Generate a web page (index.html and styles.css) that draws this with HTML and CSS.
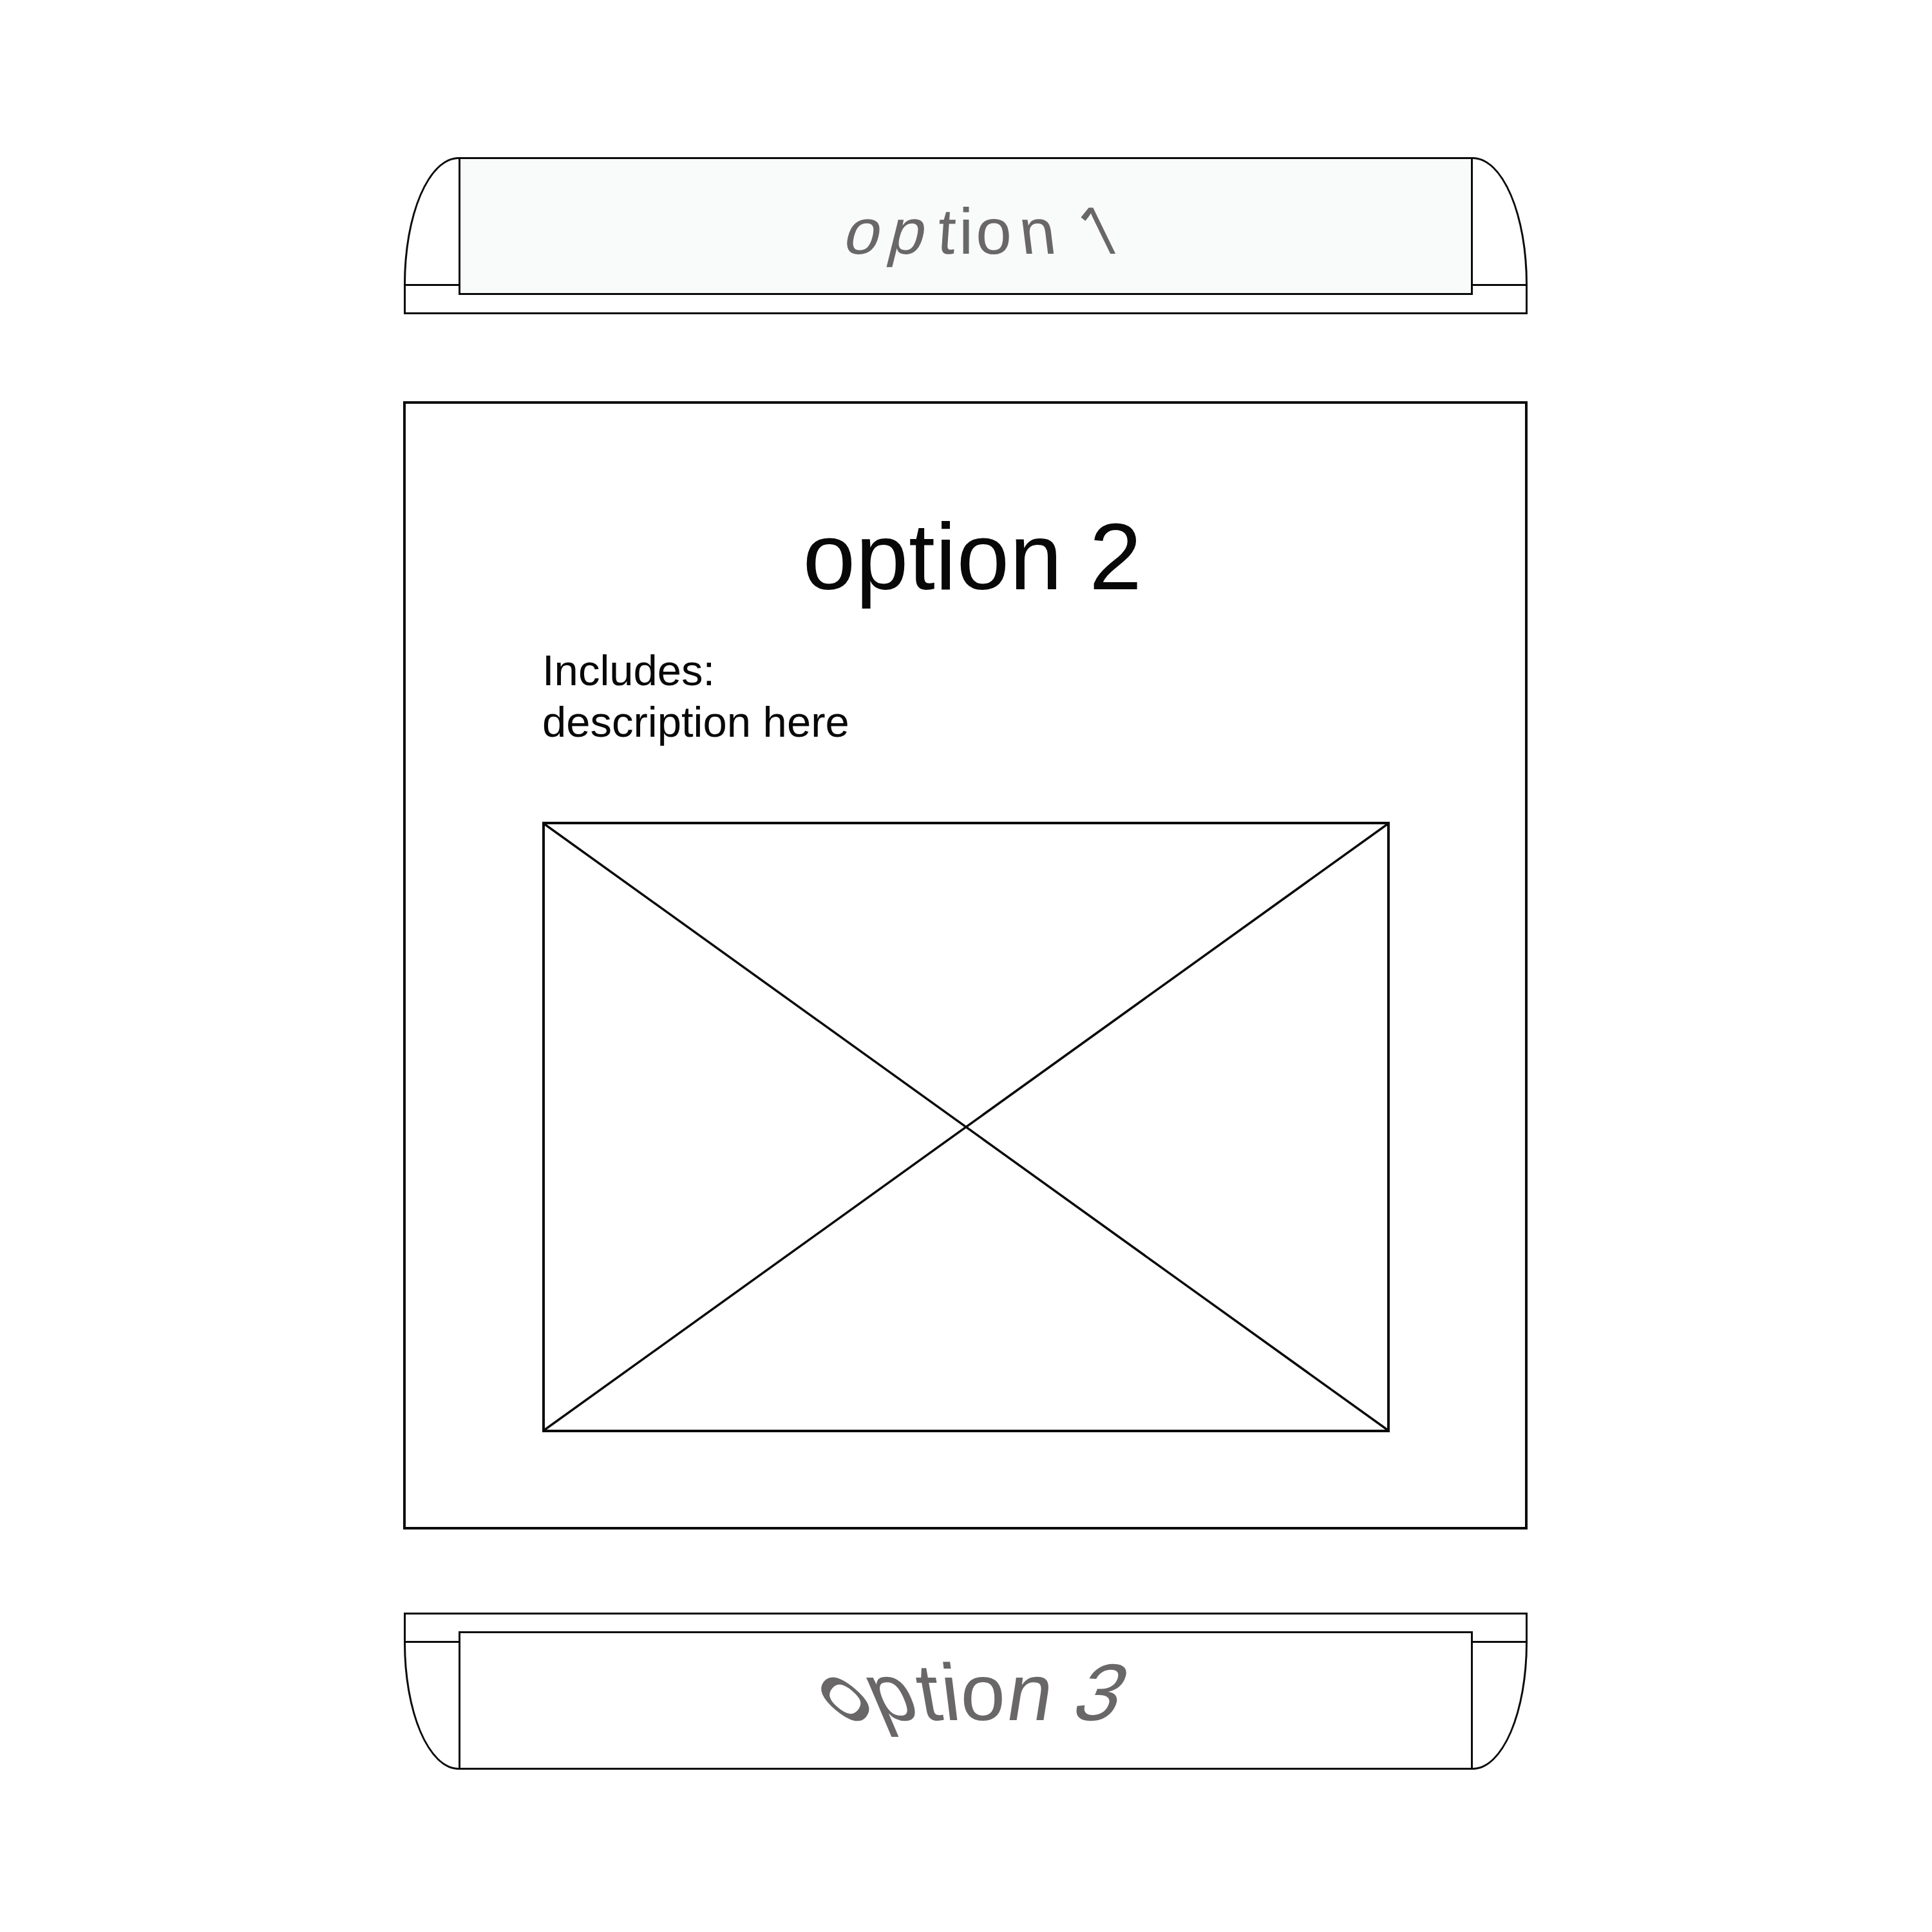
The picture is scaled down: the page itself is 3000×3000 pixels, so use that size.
FILE: index.html
```html
<!DOCTYPE html>
<html lang="en">
<head>
    <meta charset="UTF-8">
    <meta name="viewport" content="width=device-width, initial-scale=1.0">
    <title>Options Wireframe</title>
    <link rel="stylesheet" href="styles.css">
</head>
<body>
    <div class="options">
        <!-- Option 1 (collapsed, top) -->
        <div class="bar bar-top">
            <div class="cap cap-left">
                <div class="cap-curve"></div>
                <div class="cap-foot"></div>
            </div>
            <div class="bar-label label-one">
                <span class="g g-lean o1-o">o</span><span class="g g-lean o1-p">p</span><span class="g g-tilt o1-t">t</span><span class="g o1-i">i</span><span class="g o1-o2">o</span><span class="g g-back o1-n">n</span> <span class="g g-back-strong o1-one">1</span>
            </div>
            <div class="cap cap-right">
                <div class="cap-curve"></div>
                <div class="cap-foot"></div>
            </div>
        </div>

        <!-- Option 2 (expanded) -->
        <div class="option-card">
            <h2 class="option-title">option 2</h2>
            <p class="option-desc">Includes:<br>description here</p>
            <div class="image-placeholder">
                <svg viewBox="0 0 100 100" preserveAspectRatio="none">
                    <line x1="0" y1="0" x2="100" y2="100" vector-effect="non-scaling-stroke"/>
                    <line x1="100" y1="0" x2="0" y2="100" vector-effect="non-scaling-stroke"/>
                </svg>
            </div>
        </div>

        <!-- Option 3 (collapsed, bottom) -->
        <div class="bar bar-bottom">
            <div class="cap cap-left">
                <div class="cap-foot"></div>
                <div class="cap-curve"></div>
            </div>
            <div class="bar-label label-three">
                <span class="g g-flat o3-o">o</span><span class="g g-p3 o3-p">p</span><span class="g g-t3">t</span><span class="g g-i3 o3-i">i</span><span class="g o3-o2">o</span><span class="g g-n3 o3-n">n</span> <span class="g g-33">3</span>
            </div>
            <div class="cap cap-right">
                <div class="cap-foot"></div>
                <div class="cap-curve"></div>
            </div>
        </div>
    </div>
</body>
</html>
```

FILE: styles.css
```css
:root {
    --line: #0a0a0a;
    --muted-text: #696767;
    --label-bg: #f9fbfa;
}

* {
    margin: 0;
    padding: 0;
    box-sizing: border-box;
}

body {
    background: #fff;
    font-family: 'Liberation Sans', Arial, sans-serif;
    color: #080808;
}

.options {
    width: 1746px;
    margin-left: 626px;
    padding-top: 244px;
    display: flex;
    flex-direction: column;
}

/* collapsed option bars */
.bar {
    display: flex;
    width: 1745px;
    margin-left: 1px;
}

.bar-top {
    align-items: flex-start;
    border-bottom: 3px solid var(--line);
}

.bar-bottom {
    align-items: flex-end;
    border-top: 3px solid var(--line);
    margin-top: 129px;
}

.cap {
    width: 85px;
    height: 241px;
    display: flex;
    flex-direction: column;
}

.cap-curve {
    height: 200px;
    border-top: 3px solid var(--line);
    border-bottom: 3px solid var(--line);
}

.cap-foot {
    flex: 1;
}

.cap-left .cap-curve,
.cap-left .cap-foot {
    border-left: 3px solid var(--line);
}

.cap-right .cap-curve,
.cap-right .cap-foot {
    border-right: 3px solid var(--line);
}

.bar-top .cap-left .cap-curve { border-top-left-radius: 85px 197px; }
.bar-top .cap-right .cap-curve { border-top-right-radius: 85px 197px; }
.bar-bottom .cap-left .cap-curve { border-bottom-left-radius: 85px 197px; }
.bar-bottom .cap-right .cap-curve { border-bottom-right-radius: 85px 197px; }

.bar-label {
    flex: 1;
    height: 214px;
    border: 3px solid var(--line);
    color: var(--muted-text);
    font-family: 'Liberation Sans', Arial, sans-serif;
    white-space: nowrap;
}

.label-one {
    background: var(--label-bg);
    font-size: 100px;
    line-height: 100px;
    padding-top: 58px;
    padding-left: 591px;
}

.label-three {
    height: 215px;
    font-size: 125px;
    line-height: 125px;
    padding-top: 29px;
    padding-left: 562px;
}

/* hand-warped lettering */
.g {
    display: inline-block;
    transform-origin: 50% 85%;
}

.g-lean { transform: skewX(-14deg); }
.g-tilt { transform: skewX(-4deg); }
.g-back { transform: skewX(7deg); }
.g-back-strong { transform: skewX(26deg); }

.o1-o { margin-right: 13px; }
.o1-p { margin-right: 24px; }
.o1-t { margin-right: 7px; }
.o1-i { margin-right: 4px; }
.o1-o2 { margin-right: 16px; }
.o1-n { margin-right: 25px; }
.o1-one { font-family: 'Open Sans', 'Liberation Sans', sans-serif; }

.g-flat {
    transform-origin: 50% 59%;
    transform: rotate(40deg) scale(1.45, 0.65);
}
.g-p3 { transform: skewX(23deg); }
.g-t3 { transform: skewX(10deg); }
.g-i3 { transform: skewX(7deg); }
.g-n3 { transform: skewX(-9deg); }
.g-33 { transform: skewX(-22deg); }

.o3-o { margin-right: 18px; }
.o3-p { margin-right: -2px; }
.o3-i { margin-right: -3px; }
.o3-o2 { margin-right: -2px; }
.o3-n { margin-right: -4px; }

/* expanded option */
.option-card {
    margin-top: 135px;
    height: 1752px;
    border: 4px solid var(--line);
    padding: 164px 210px 0 212px;
}

.option-title {
    font-size: 147px;
    line-height: 147px;
    letter-spacing: 0.5px;
    font-weight: normal;
    text-align: center;
    padding-left: 20px;
}

.option-desc {
    margin-top: 63px;
    font-size: 67px;
    line-height: 80px;
}

.image-placeholder {
    margin-top: 115px;
    height: 948px;
    border: 4px solid var(--line);
}

.image-placeholder svg {
    display: block;
    width: 100%;
    height: 100%;
}

.image-placeholder line {
    stroke: var(--line);
    stroke-width: 3.5;
}
```
